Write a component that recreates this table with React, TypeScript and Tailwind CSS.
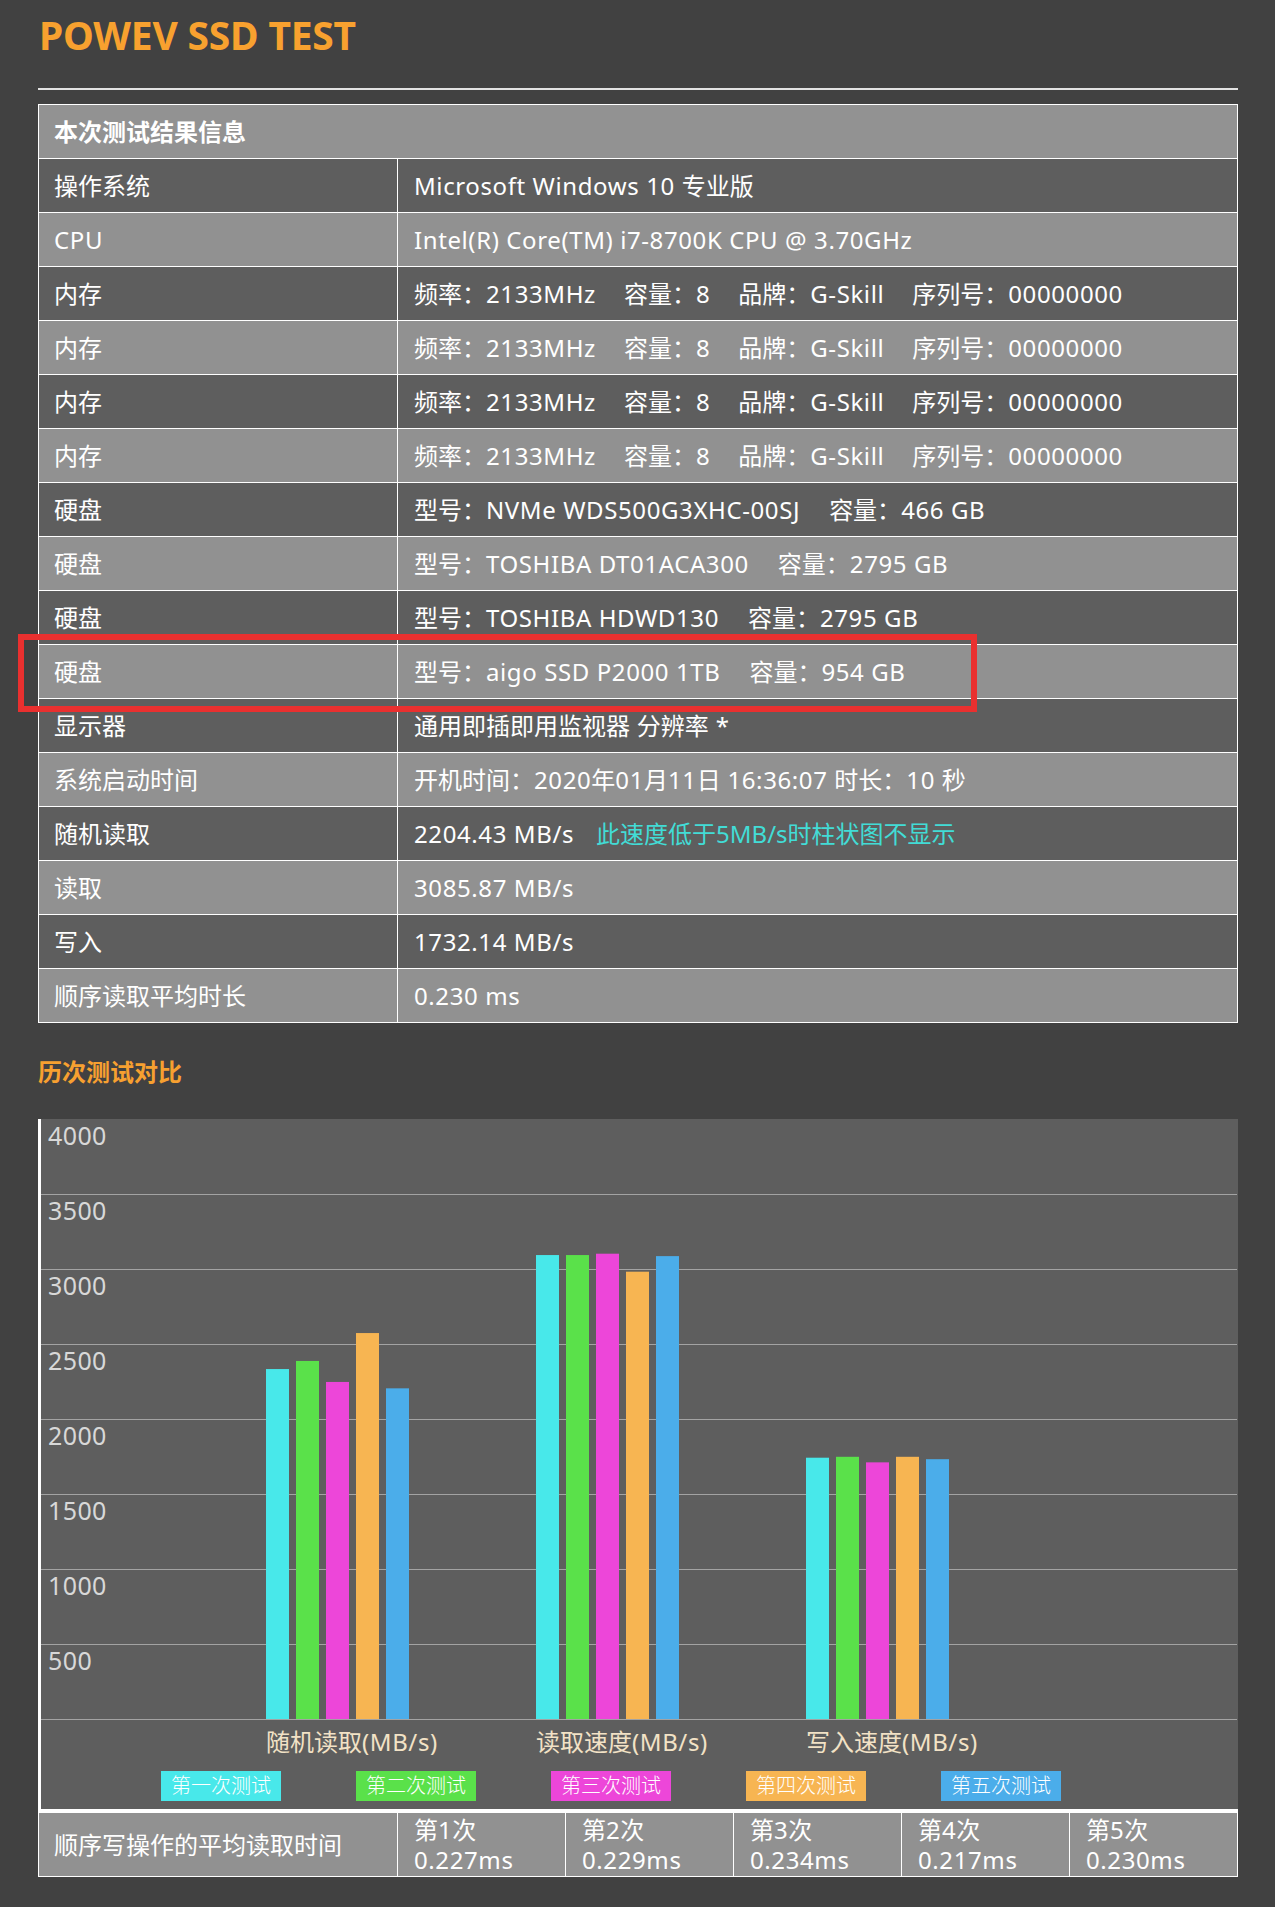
import React from "react";

const FONT = "font-['Noto_Sans','Noto_Sans_CJK_SC',sans-serif]";

// Wrap Latin runs in a slightly tracked span so they match the reference's wider Latin glyphs
function lat(s: string): React.ReactNode {
  const parts = s.split(/([\u0020-\u007e]+)/);
  return parts.map((p, i) =>
    /^[\u0020-\u007e]+$/.test(p) ? (
      <span key={i} className="tracking-[0.6px]">
        {p}
      </span>
    ) : (
      <React.Fragment key={i}>{p}</React.Fragment>
    )
  );
}

type Row = { label: string; value: React.ReactNode };

const Mem = () => (
  <>
    <span>{lat("频率：2133MHz")}</span>
    <span className="ml-[28px]">{lat("容量：8")}</span>
    <span className="ml-[28px]">{lat("品牌：G-Skill")}</span>
    <span className="ml-[28px]">{lat("序列号：00000000")}</span>
  </>
);

const Disk = ({ model, cap }: { model: string; cap: string }) => (
  <>
    <span>{lat("型号：" + model)}</span>
    <span className="ml-[29px]">{lat("容量：" + cap)}</span>
  </>
);

const rows: Row[] = [
  { label: "操作系统", value: lat("Microsoft Windows 10 专业版") },
  { label: "CPU", value: lat("Intel(R) Core(TM) i7-8700K CPU @ 3.70GHz") },
  { label: "内存", value: <Mem /> },
  { label: "内存", value: <Mem /> },
  { label: "内存", value: <Mem /> },
  { label: "内存", value: <Mem /> },
  { label: "硬盘", value: <Disk model="NVMe WDS500G3XHC-00SJ" cap="466 GB" /> },
  { label: "硬盘", value: <Disk model="TOSHIBA DT01ACA300" cap="2795 GB" /> },
  { label: "硬盘", value: <Disk model="TOSHIBA HDWD130" cap="2795 GB" /> },
  { label: "硬盘", value: <Disk model="aigo SSD P2000 1TB" cap="954 GB" /> },
  { label: "显示器", value: lat("通用即插即用监视器 分辨率 *") },
  { label: "系统启动时间", value: lat("开机时间：2020年01月11日 16:36:07 时长：10 秒") },
  {
    label: "随机读取",
    value: (
      <>
        <span>{lat("2204.43 MB/s")}</span>
        <span className="ml-[22px] text-[#42dcd6]">此速度低于5MB/s时柱状图不显示</span>
      </>
    ),
  },
  { label: "读取", value: lat("3085.87 MB/s") },
  { label: "写入", value: lat("1732.14 MB/s") },
  { label: "顺序读取平均时长", value: lat("0.230 ms") },
];

const COLORS = ["#48e8ea", "#5ae14a", "#ed46d9", "#f7b552", "#4badea"];
const LEGEND_BG = ["bg-[#48e8ea]", "bg-[#5ae14a]", "bg-[#ed46d9]", "bg-[#f7b552]", "bg-[#4badea]"];
const LEGEND = ["第一次测试", "第二次测试", "第三次测试", "第四次测试", "第五次测试"];
const GROUPS = [
  [2333, 2387, 2247, 2573, 2204.43],
  [3093, 3093, 3102, 2982, 3085.87],
  [1742, 1748, 1711, 1748, 1732.14],
];
const GROUP_LABELS = ["随机读取(MB/s)", "读取速度(MB/s)", "写入速度(MB/s)"];
const TIMES = ["0.227ms", "0.229ms", "0.234ms", "0.217ms", "0.230ms"];

function Chart() {
  const yLabels = [4000, 3500, 3000, 2500, 2000, 1500, 1000, 500];
  return (
    <svg width="1196" height="601" className="block overflow-visible">
      {[1, 2, 3, 4, 5, 6, 7, 8].map((k) => (
        <line key={k} x1={0} x2={1196} y1={75 * k + 0.5} y2={75 * k + 0.5} stroke="#a3a3a3" strokeWidth={1} />
      ))}
      {yLabels.map((v, k) => (
        <text
          key={v}
          x={7}
          y={26 + 75 * k}
          fill="#d8d8d8"
          fontSize={25}
          letterSpacing={0.4}
          fontFamily="'Noto Sans', sans-serif"
        >
          {v}
        </text>
      ))}
      {GROUPS.map((g, gi) =>
        g.map((v, i) => {
          const h = v * 0.15;
          return (
            <rect key={`${gi}-${i}`} x={225 + gi * 270 + i * 30} y={600 - h} width={23} height={h} fill={COLORS[i]} />
          );
        })
      )}
    </svg>
  );
}

export default function App() {
  return (
    <div className={`min-h-[1907px] bg-[#414141] text-white ${FONT}`}>
      <div className="ml-[38px] w-[1200px] pt-[15px] pb-[31px]">
        <h1 className="text-[39px] leading-[39px] font-bold text-[#f8a12f] pl-[1px] tracking-[-0.2px]">
          POWEV SSD TEST
        </h1>
        <div className="mt-[34px] h-[2px] bg-[#e2e2e2]" />
        <div className="relative mt-[14px]">
          <div className="border-x border-b border-white text-[24px] leading-[30px]">
            <div className="h-[54px] border-t border-white bg-[#929292] flex items-center pl-[15px] font-bold">
              本次测试结果信息
            </div>
            {rows.map((r, i) => (
              <div
                key={i}
                className={`h-[54px] border-t border-white flex ${i % 2 === 0 ? "bg-[#5e5e5e]" : "bg-[#919191]"}`}
              >
                <div className="w-[359px] shrink-0 border-r border-white flex items-center pl-[15px]">
                  <span>{lat(r.label)}</span>
                </div>
                <div className="flex-1 flex items-center pl-[16px] whitespace-nowrap">
                  <span>{r.value}</span>
                </div>
              </div>
            ))}
          </div>
          <div className="absolute left-[-20px] top-[530px] w-[959px] h-[78px] border-[6px] border-[#e9302f] pointer-events-none" />
        </div>

        <h2 className="mt-[36px] text-[24px] leading-[26px] font-bold text-[#f7a030]">历次测试对比</h2>

        <div className="mt-[34px] border-l-[3px] border-white bg-[#5e5e5e]">
          <Chart />
          <div className="flex pl-[225px] mt-[7px] text-[24px] leading-[30px] text-[#f2e2c6]">
            {GROUP_LABELS.map((l) => (
              <div key={l} className="w-[270px]">
                <span>{lat(l)}</span>
              </div>
            ))}
          </div>
          <div className="flex pl-[120px] gap-[75px] mt-[14px] pb-[8px]">
            {LEGEND.map((l, i) => (
              <div
                key={l}
                className={`w-[120px] h-[30px] flex items-center justify-center text-[20px] font-light text-white ${LEGEND_BG[i]}`}
              >
                {l}
              </div>
            ))}
          </div>
        </div>

        <div className="flex border-x border-b border-t-[4px] border-white bg-[#919191] h-[68px] text-[24px]">
          <div className="w-[359px] shrink-0 border-r border-white flex items-center pl-[15px]">
            顺序写操作的平均读取时间
          </div>
          {TIMES.map((t, i) => (
            <div
              key={t + i}
              className={`w-[168px] flex flex-col justify-center pl-[16px] leading-[30px] ${i < 4 ? "border-r border-white" : "flex-1"}`}
            >
              <span>{lat(`第${i + 1}次`)}</span>
              <span>{lat(t)}</span>
            </div>
          ))}
        </div>
      </div>
    </div>
  );
}
